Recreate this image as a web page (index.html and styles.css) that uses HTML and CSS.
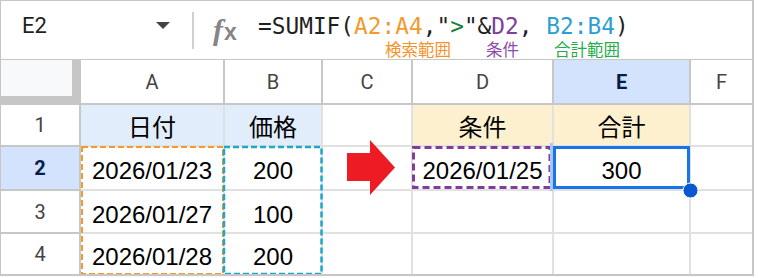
FILE: index.html
```html
<!DOCTYPE html>
<html lang="ja">
<head>
  <meta charset="UTF-8">
  <title>SUMIF</title>
  <link rel="stylesheet" href="styles.css">
</head>
<body>
  <div class="frame">
    <!-- Formula bar -->
    <div class="formula-bar">
      <div class="name-box">
        <span class="cell-ref">E2</span>
        <span class="caret"></span>
      </div>
      <div class="divider"></div>
      <div class="fx"><span class="fx-f">f</span><span class="fx-x">x</span></div>
      <div class="formula">
        <div class="formula-text">=SUMIF(<span class="ref-a">A2:A4</span>,"<span class="str">&gt;</span>"&amp;<span class="ref-d">D2</span>, <span class="ref-b">B2:B4</span>)</div>
        <div class="notes">
          <span class="note-a">検索範囲</span>
          <span class="note-d">条件</span>
          <span class="note-b">合計範囲</span>
        </div>
      </div>
    </div>

    <!-- Sheet grid -->
    <div class="sheet">
      <div class="cell corner"><div class="corner-box"></div></div>
      <div class="cell col-head">A</div>
      <div class="cell col-head">B</div>
      <div class="cell col-head">C</div>
      <div class="cell col-head">D</div>
      <div class="cell col-head active">E</div>
      <div class="cell col-head">F</div>

      <div class="cell row-head">1</div>
      <div class="cell blue">日付</div>
      <div class="cell blue">価格</div>
      <div class="cell"></div>
      <div class="cell yellow">条件</div>
      <div class="cell yellow">合計</div>
      <div class="cell"></div>

      <div class="cell row-head active">2</div>
      <div class="cell">2026/01/23</div>
      <div class="cell">200</div>
      <div class="cell"></div>
      <div class="cell">2026/01/25</div>
      <div class="cell">300</div>
      <div class="cell"></div>

      <div class="cell row-head">3</div>
      <div class="cell">2026/01/27</div>
      <div class="cell">100</div>
      <div class="cell"></div>
      <div class="cell"></div>
      <div class="cell"></div>
      <div class="cell"></div>

      <div class="cell row-head">4</div>
      <div class="cell">2026/01/28</div>
      <div class="cell">200</div>
      <div class="cell"></div>
      <div class="cell"></div>
      <div class="cell"></div>
      <div class="cell"></div>

      <!-- range marks, arrow and selection drawn over the grid -->
      <svg class="marks" viewBox="1 60 751 214" width="751" height="214">
        <rect x="82" y="147" width="141" height="127" fill="none" stroke="#f49a2a" stroke-width="2" stroke-dasharray="6 3"/>
        <rect x="224" y="147" width="97.5" height="127" fill="none" stroke="#1aa8cb" stroke-width="2.5" stroke-dasharray="6 3"/>
        <polygon points="347,153 370,153 370,140 395,167.5 370,195 370,181 347,181" fill="#ed1c24"/>
        <rect x="413.5" y="147.5" width="136.5" height="40" fill="none" stroke="#833c9c" stroke-width="3" stroke-dasharray="7 4"/>
        <rect x="550" y="143" width="3" height="48" fill="#a8c7fa"/>
        <rect x="554.5" y="147.5" width="134" height="40" fill="none" stroke="#1a73e8" stroke-width="3"/>
        <circle cx="690.5" cy="190.5" r="7.5" fill="#0b57d0" stroke="#fff" stroke-width="1"/>
      </svg>
    </div>
  </div>
</body>
</html>
```

FILE: styles.css
```css
/* General */
body {
  margin: 0;
  background: #fff;
}

.frame {
  width: 754px;
  height: 276px;
  box-sizing: border-box;
  border: 1px solid #c6c6c6;
  border-right-width: 2px;
  border-bottom-width: 2px;
  font-family: "Liberation Sans", "Noto Sans CJK JP", sans-serif;
  overflow: hidden;
}

/* Formula bar */
.formula-bar {
  display: flex;
  height: 58px;
  border-bottom: 1px solid #c6c6c6;
}

.name-box {
  width: 191px;
  box-sizing: border-box;
  padding: 14px 22px 0 21px;
  display: flex;
  align-items: flex-start;
}

.cell-ref {
  font: 22px/22px Roboto, sans-serif;
  color: #1f1f1f;
}

.caret {
  margin-left: auto;
  margin-top: 7px;
  width: 0;
  height: 0;
  border-left: 7.5px solid transparent;
  border-right: 7.5px solid transparent;
  border-top: 7px solid #444;
}

.divider {
  width: 2px;
  height: 37px;
  margin-top: 11px;
  background: #d0d0d0;
}

.fx {
  width: 28px;
  margin-left: 19px;
  margin-top: 15px;
  height: 28px;
  display: flex;
  align-items: baseline;
  color: #858585;
}

.fx-f {
  font: bold italic 30px/28px "Liberation Serif", serif;
}

.fx-x {
  font: bold 23px/28px "Liberation Sans", sans-serif;
  margin-left: 1px;
}

.formula {
  margin-left: 17px;
}

.formula-text {
  margin-top: 14px;
  font: 22.8px/23px "DejaVu Sans Mono", monospace;
  color: #1f1f1f;
  white-space: pre;
}

.ref-a { color: #f29a2e; }
.ref-d { color: #7e3f98; }
.ref-b { color: #2b9fd3; }
.str { color: #188038; }

.notes {
  display: flex;
  gap: 35px;
  margin-top: 3px;
  padding-left: 127px;
  font: 16.5px/17px "Noto Sans CJK JP", sans-serif;
}

.note-a { color: #f7922a; }
.note-d { color: #8e4ba8; }
.note-b { color: #25ad4a; }

/* Sheet grid */
.sheet {
  position: relative;
  display: grid;
  grid-template-columns: 80px 144px 98px 90px 141px 137px 61px;
  grid-template-rows: 45px 42px 44px 43px 40px;
}

.cell {
  box-sizing: border-box;
  border-right: 2px solid #e1e1e1;
  border-bottom: 2px solid #e1e1e1;
  display: flex;
  align-items: center;
  justify-content: center;
  padding-top: 6px;
  font-size: 24px;
  line-height: 24px;
  color: #000;
}

.sheet > .cell:nth-child(7n) {
  border-right: 0;
}

.sheet > .cell:nth-child(n+29) {
  border-bottom: 0;
}

.col-head,
.row-head {
  padding-top: 0;
  border-color: #c7c7c7;
  font: 20px/20px Roboto, sans-serif;
  color: #444;
}

.corner {
  border: 0;
  padding: 0;
  background: #c6c6c6;
  align-items: flex-start;
  justify-content: flex-start;
}

.corner-box {
  width: 71px;
  height: 36px;
  background: #f8f9fa;
}

.active {
  background: #d3e3fd;
  color: #041e49;
  font-weight: bold;
}

.blue {
  background: #e2edfb;
}

.yellow {
  background: #fdf0cf;
}

.marks {
  position: absolute;
  left: 0;
  top: 0;
  overflow: visible;
  pointer-events: none;
}
```
